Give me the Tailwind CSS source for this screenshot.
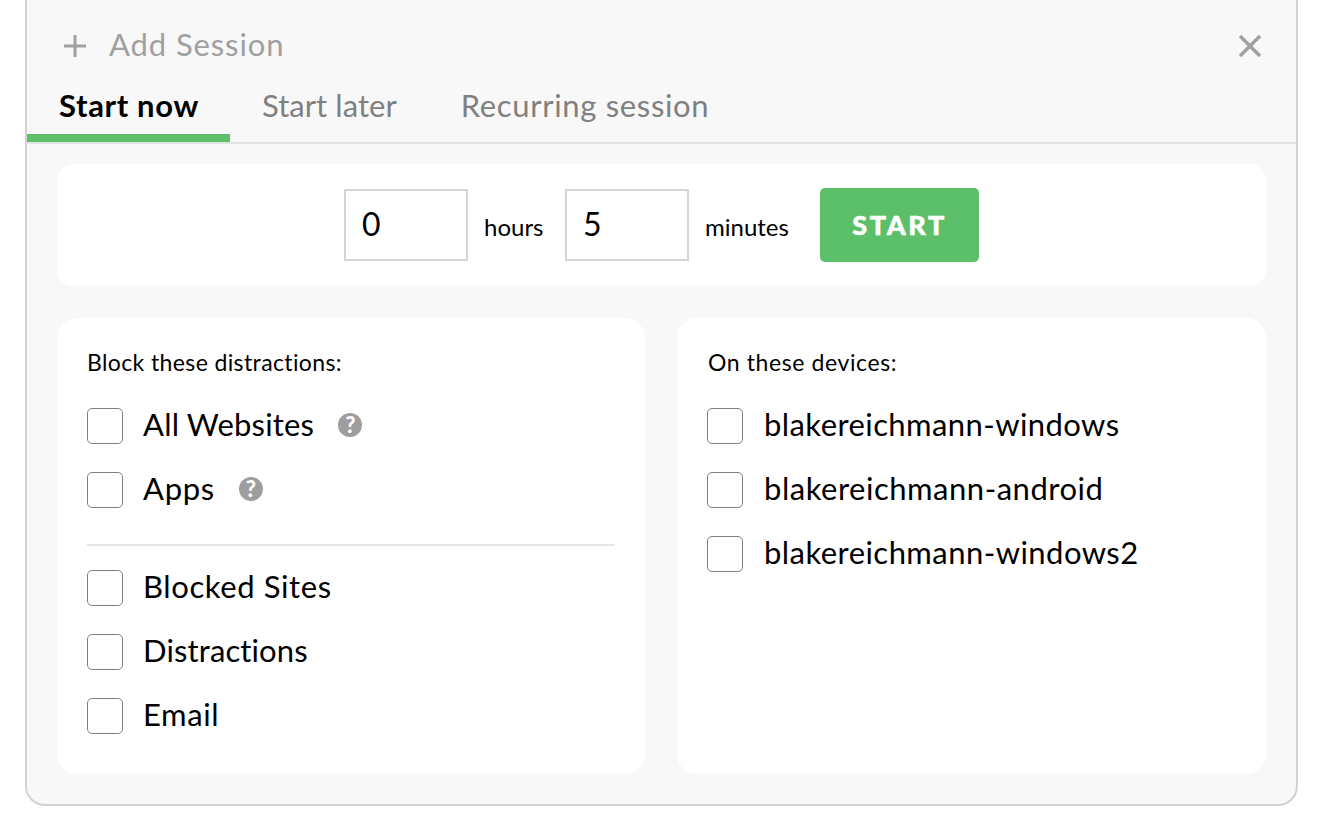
<!DOCTYPE html>
<html lang="en">
<head>
  <meta charset="UTF-8" />
  <title>Add Session</title>
  <script src="https://cdn.jsdelivr.net/npm/@tailwindcss/browser@4"></script>
</head>
<body class="bg-white text-black font-['Lato','Open_Sans',sans-serif] [font-variant-ligatures:none] h-[827px] overflow-hidden">

  <div class="ml-[25px] w-[1273px] h-[806px] bg-[#f8f8f8] border-x-2 border-b-2 border-[#d2d2d2] rounded-b-[20px]">

    <!-- header + tabs -->
    <div class="h-[144px] border-b-2 border-[#e3e3e3]">
      <div class="h-[88px] pt-[28px] pl-[36px] pr-[34px] flex items-start justify-between">
        <div class="flex items-center h-[36px] text-[#a0a0a0]">
          <svg class="w-[24px] h-[24px]" viewBox="0 0 24 24" fill="none" stroke="#a0a0a0" stroke-width="3"><path d="M12 1v22M1 12h22"/></svg>
          <span class="ml-[22px] mb-[4px] text-[31px] leading-[36px] tracking-[0.9px]">Add Session</span>
        </div>
        <svg class="w-[24px] h-[24px] mt-[6px]" viewBox="0 0 24 24" fill="none" stroke="#a0a0a0" stroke-width="3.4"><path d="M2 2l20 20M22 2L2 22"/></svg>
      </div>
      <div class="flex h-[54px]">
        <div class="w-[203px] h-[54px] pl-[32px] border-b-[8px] border-[#5cc06b] text-[31px] leading-[36px] font-bold tracking-[0.65px]"><span class="relative -top-[1px]">Start now</span></div>
        <div class="ml-[32px] -mt-[1px] text-[31px] leading-[36px] text-[#808080] tracking-[0.05px]">Start later</div>
        <div class="ml-[64px] -mt-[1px] text-[31px] leading-[36px] text-[#808080] tracking-[0.67px]">Recurring session</div>
      </div>
    </div>

    <div class="px-[30px] pt-[20px]">
      <!-- duration -->
      <div class="h-[122px] bg-white rounded-[16px] flex items-center pl-[287px]">
        <div class="w-[124px] h-[72px] border-2 border-[#d5d5d5] pl-[16px] pt-[14px] text-[32px] leading-[38px]">0</div>
        <span class="ml-[16px] w-[81px] text-[24px] leading-[30px] mt-[4px]">hours</span>
        <div class="w-[124px] h-[72px] border-2 border-[#d5d5d5] pl-[16px] pt-[14px] text-[32px] leading-[38px]">5</div>
        <span class="ml-[16px] w-[115px] text-[24px] leading-[30px] mt-[4px]">minutes</span>
        <button class="w-[159px] h-[74px] bg-[#5cc06b] rounded-[5px] text-white text-[27px] font-black tracking-[2.6px] [-webkit-text-stroke:0.5px_white]">START</button>
      </div>

      <div class="grid grid-cols-[588px_589px] gap-x-[32px] mt-[32px]">
        <!-- distractions -->
        <div class="h-[456px] bg-white rounded-[20px] pt-[29px] px-[30px]">
          <p class="text-[23px] leading-[30px] tracking-[0.38px]">Block these distractions:</p>
          <div class="mt-[31px] flex flex-col gap-[28px]">
            <label class="flex items-center h-[36px]">
              <span class="w-[36px] h-[36px] border border-[#808080] rounded-[5px] bg-white"></span>
              <span class="ml-[20px] mb-[4px] text-[31px] tracking-[0.2px]">All Websites</span>
              <span class="ml-[24px] w-[24px] h-[24px] -mt-[2px] rounded-full bg-[#9e9e9e] text-white text-[22px] leading-[24px] font-black text-center">?</span>
            </label>
            <label class="flex items-center h-[36px]">
              <span class="w-[36px] h-[36px] border border-[#808080] rounded-[5px] bg-white"></span>
              <span class="ml-[20px] mb-[4px] text-[31px] tracking-[0.7px]">Apps</span>
              <span class="ml-[24px] w-[24px] h-[24px] -mt-[2px] rounded-full bg-[#9e9e9e] text-white text-[22px] leading-[24px] font-black text-center">?</span>
            </label>
          </div>
          <div class="mt-[36px] mb-[24px] h-[2px] bg-[#e6e6e6] w-[528px]"></div>
          <div class="flex flex-col gap-[28px]">
            <label class="flex items-center h-[36px]">
              <span class="w-[36px] h-[36px] border border-[#808080] rounded-[5px] bg-white"></span>
              <span class="ml-[20px] mb-[4px] text-[31px] tracking-[0.6px]">Blocked Sites</span>
            </label>
            <label class="flex items-center h-[36px]">
              <span class="w-[36px] h-[36px] border border-[#808080] rounded-[5px] bg-white"></span>
              <span class="ml-[20px] mb-[4px] text-[31px] tracking-[0.12px]">Distractions</span>
            </label>
            <label class="flex items-center h-[36px]">
              <span class="w-[36px] h-[36px] border border-[#808080] rounded-[5px] bg-white"></span>
              <span class="ml-[20px] mb-[4px] text-[31px] tracking-[0.6px]">Email</span>
            </label>
          </div>
        </div>

        <!-- devices -->
        <div class="h-[456px] bg-white rounded-[20px] pt-[29px] px-[30px]">
          <p class="text-[23px] leading-[30px] tracking-[0.6px] pl-[1px]">On these devices:</p>
          <div class="mt-[31px] flex flex-col gap-[28px]">
            <label class="flex items-center h-[36px]">
              <span class="w-[36px] h-[36px] border border-[#808080] rounded-[5px] bg-white"></span>
              <span class="ml-[21px] mb-[4px] text-[31px] tracking-[0.42px]">blakereichmann-windows</span>
            </label>
            <label class="flex items-center h-[36px]">
              <span class="w-[36px] h-[36px] border border-[#808080] rounded-[5px] bg-white"></span>
              <span class="ml-[21px] mb-[4px] text-[31px] tracking-[0.52px]">blakereichmann-android</span>
            </label>
            <label class="flex items-center h-[36px]">
              <span class="w-[36px] h-[36px] border border-[#808080] rounded-[5px] bg-white"></span>
              <span class="ml-[21px] mb-[4px] text-[31px] tracking-[0.45px]">blakereichmann-windows2</span>
            </label>
          </div>
        </div>
      </div>
    </div>
  </div>

</body>
</html>
